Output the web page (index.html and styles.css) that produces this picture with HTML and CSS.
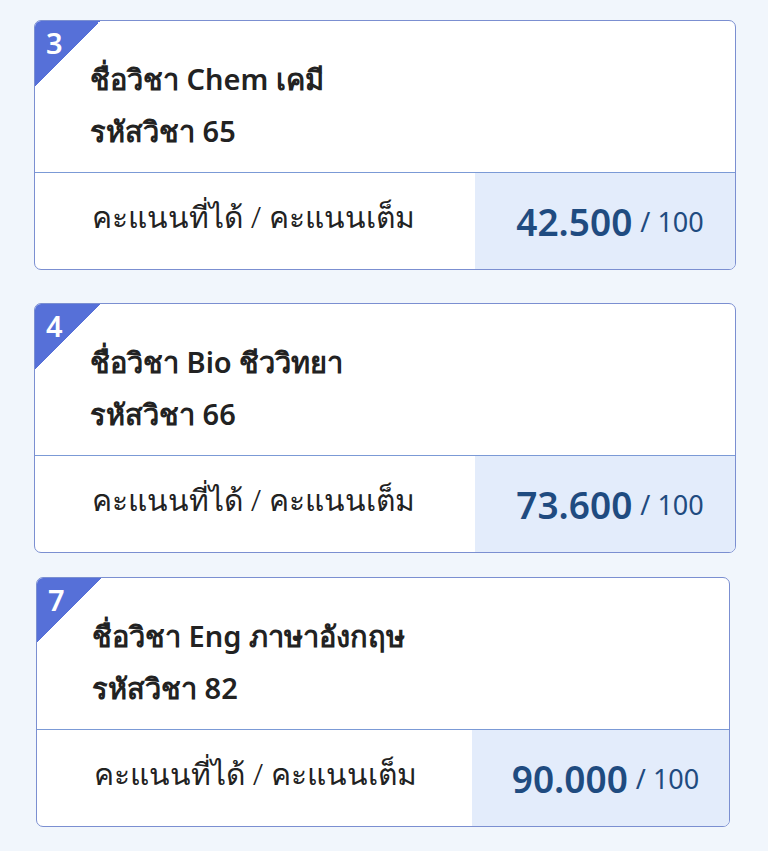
FILE: index.html
```html
<!DOCTYPE html>
<html lang="th">
<head>
<meta charset="utf-8">
<link rel="stylesheet" href="styles.css">
</head>
<body>
<div class="page">
  <div class="card">
    <div class="badge"><span>3</span></div>
    <div class="info">
      <div class="line">ชื่อวิชา Chem เคมี</div>
      <div class="line">รหัสวิชา 65</div>
    </div>
    <div class="score-row">
      <div class="label">คะแนนที่ได้ / คะแนนเต็ม</div>
      <div class="score"><b>42.500</b> / 100</div>
    </div>
  </div>
  <div class="card">
    <div class="badge"><span>4</span></div>
    <div class="info">
      <div class="line">ชื่อวิชา Bio ชีววิทยา</div>
      <div class="line">รหัสวิชา 66</div>
    </div>
    <div class="score-row">
      <div class="label">คะแนนที่ได้ / คะแนนเต็ม</div>
      <div class="score"><b>73.600</b> / 100</div>
    </div>
  </div>
  <div class="card last">
    <div class="badge"><span>7</span></div>
    <div class="info">
      <div class="line">ชื่อวิชา Eng ภาษาอังกฤษ</div>
      <div class="line">รหัสวิชา 82</div>
    </div>
    <div class="score-row">
      <div class="label">คะแนนที่ได้ / คะแนนเต็ม</div>
      <div class="score"><b>90.000</b> / 100</div>
    </div>
  </div>
</div>
</body>
</html>
```
FILE: styles.css
```css
html, body {
  margin: 0;
  padding: 0;
}
body {
  background: #f1f6fc;
  font-family: "Noto Sans", "Open Sans", sans-serif;
  width: 768px;
  height: 851px;
  overflow: hidden;
}
.page {
  display: flex;
  flex-direction: column;
  gap: 33px;
  padding: 20px 32px 0 34px;
}
.card {
  position: relative;
  background: #fff;
  border: 1.5px solid #7b8fd1;
  border-radius: 7px;
  overflow: hidden;
  height: 248px;
  display: flex;
  flex-direction: column;
}
.card.last {
  margin: -9px 6px 0 2px;
}
.badge {
  position: absolute;
  left: 0;
  top: 0;
  width: 65px;
  height: 65px;
  background: linear-gradient(135deg, #5670d8 50%, transparent 50%);
}
.badge span {
  position: absolute;
  left: 11px;
  top: 6px;
  color: #fff;
  font-weight: 600;
  font-size: 29px;
  line-height: 32px;
}
.info {
  height: 152px;
  box-sizing: border-box;
  padding: 39px 0 0 55px;
  display: flex;
  flex-direction: column;
  gap: 14px;
  border-bottom: 1.5px solid #7b9ad6;
}
.line {
  font-size: 29px;
  line-height: 38px;
  font-weight: 600;
  color: #222;
}
.score-row {
  flex: 1;
  display: flex;
}
.label {
  flex: 1;
  display: flex;
  align-items: center;
  padding: 0 0 8px 57px;
  font-size: 30px;
  font-weight: 300;
  color: #222;
}
.score {
  width: 260px;
  box-sizing: border-box;
  background: #e3ecfb;
  display: flex;
  align-items: center;
  justify-content: center;
  gap: 8px;
  padding: 0 0 0 10px;
  color: #1f4b80;
  font-size: 27px;
  font-weight: 400;
}
.score b {
  font-size: 37px;
  font-weight: 600;
}
.last .score {
  width: 257px;
}
```
